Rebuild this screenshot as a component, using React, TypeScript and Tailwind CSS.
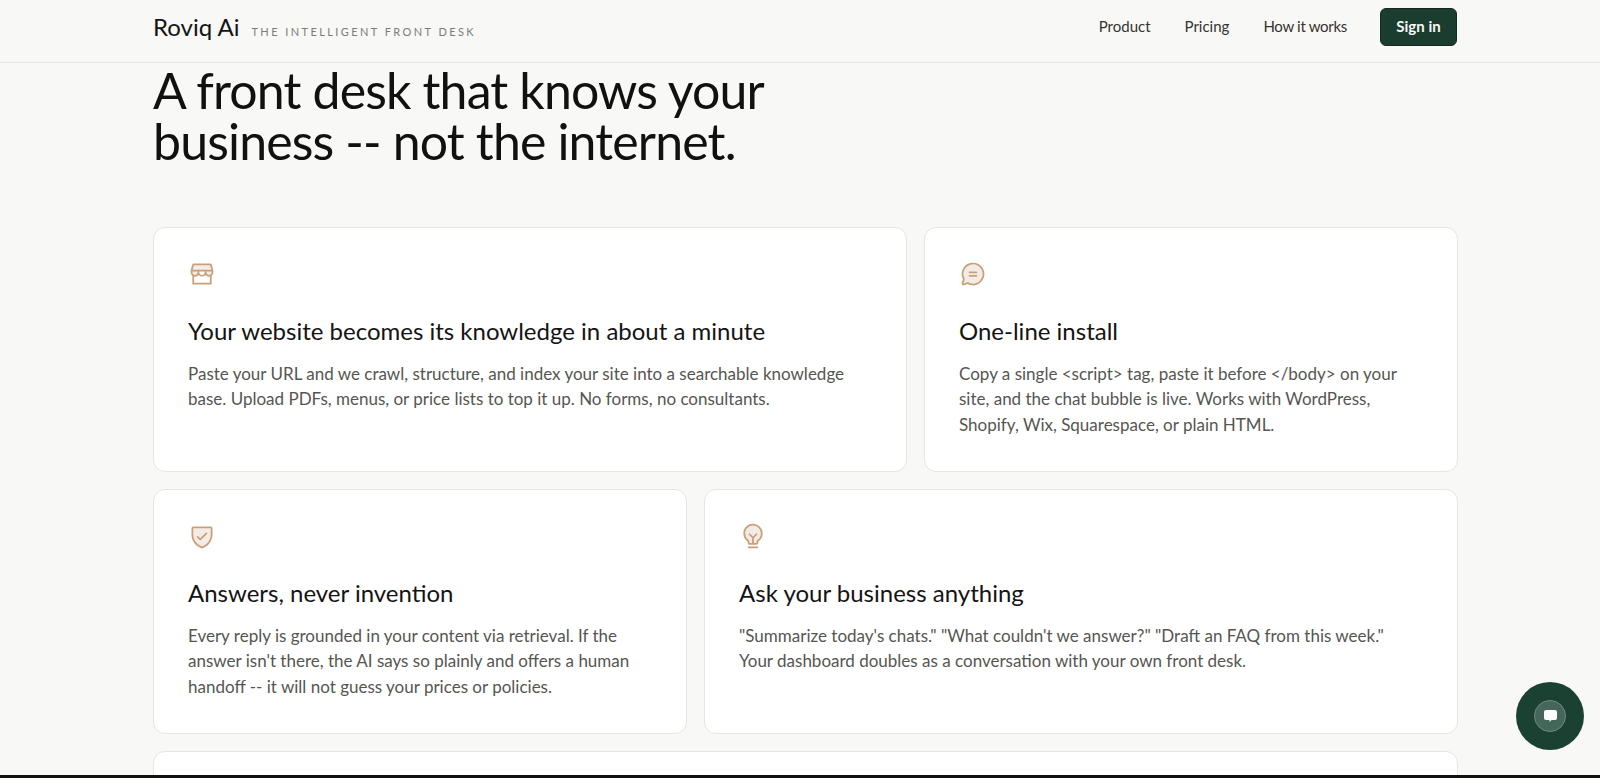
import { PiStorefrontDuotone, PiChatCircleTextDuotone, PiShieldCheckDuotone, PiLightbulbFilamentDuotone } from "react-icons/pi";
import type { ReactNode } from "react";

function Card({ icon, title, children, className }: { icon: ReactNode; title: string; children: ReactNode; className: string }) {
    return (
        <div className={`h-[245px] rounded-xl border border-[#e6e5e0] bg-white pl-[34px] pr-[34px] pt-[32px] ${className}`}>
            <div className="h-[28px] text-[28px] text-[#c79f78]">{icon}</div>
            <h3 className="mt-[27px] text-[24px] leading-[32px] font-normal text-[#141414]">{title}</h3>
            <p className="mt-[14px] text-[17px] leading-[25.5px] text-[#555652]">{children}</p>
        </div>
    );
}

export default function App() {
    return (
        <div className="relative h-[778px] overflow-hidden bg-[#f8f8f6] font-['Lato',sans-serif]">
            {/* Header */}
            <header className="flex h-[63px] items-center justify-between border-b border-[#e6e5e0] pb-[9px] pl-[153px] pr-[143px]">
                <div className="flex items-baseline gap-[12px]">
                    <span className="text-[24px] text-[#141414]">Roviq Ai</span>
                    <span className="text-[11px] tracking-[0.22em] text-[#7c7c78]">THE INTELLIGENT FRONT DESK</span>
                </div>
                <nav className="flex items-center gap-[34px] text-[15px] text-[#333431]">
                    <a>Product</a>
                    <a>Pricing</a>
                    <a className="tracking-[-0.3px]">How it works</a>
                    <button className="-ml-px h-[38px] w-[77px] rounded-md border border-[#14291f] bg-[#1b3d30] text-[15px] font-bold text-[#f8f8f6]">Sign in</button>
                </nav>
            </header>

            <main className="pl-[153px] pr-[142px]">
                <h1 className="mt-[2px] text-[50px] leading-[51px] font-normal tracking-[-0.85px] text-[#111111]">
                    A front desk that knows your
                    <br />
                    business -- not the internet.
                </h1>

                <div className="mt-[59.5px] flex flex-col gap-[17px]">
                    <div className="flex gap-[17px]">
                        <Card className="w-[754px]" icon={<PiStorefrontDuotone />} title="Your website becomes its knowledge in about a minute">
                            Paste your URL and we crawl, structure, and index your site into a searchable knowledge base. Upload PDFs, menus, or price lists to top it up. No forms, no consultants.
                        </Card>
                        <Card className="w-[533.5px]" icon={<PiChatCircleTextDuotone />} title="One-line install">
                            Copy a single &lt;script&gt; tag, paste it before &lt;/body&gt; on your site, and the chat bubble is live. Works with WordPress, Shopify, Wix, Squarespace, or plain HTML.
                        </Card>
                    </div>
                    <div className="flex gap-[17px]">
                        <Card className="w-[534px]" icon={<PiShieldCheckDuotone />} title="Answers, never invention">
                            Every reply is grounded in your content via retrieval. If the answer isn't there, the AI says so plainly and offers a human handoff -- it will not guess your prices or policies.
                        </Card>
                        <Card className="w-[753.5px]" icon={<PiLightbulbFilamentDuotone />} title="Ask your business anything">
                            "Summarize today's chats." "What couldn't we answer?" "Draft an FAQ from this week."
                            <br />
                            Your dashboard doubles as a conversation with your own front desk.
                        </Card>
                    </div>
                    <div className="h-[60px] w-[1304.5px] rounded-xl border border-[#e6e5e0] bg-white" />
                </div>
            </main>

            {/* Chat bubble */}
            <button className="absolute left-[1516px] top-[682px] flex h-[68px] w-[68px] items-center justify-center rounded-full bg-[#1b4133]">
                <span className="flex h-[32px] w-[32px] items-center justify-center rounded-full border border-[#6f8a7e] bg-[#45665a]">
                    <svg width="13" height="12" viewBox="0 0 13 12" fill="#ffffff">
                        <path d="M2 0h9a2 2 0 0 1 2 2v6a2 2 0 0 1-2 2H7.5L5.5 12V10H2a2 2 0 0 1-2-2V2a2 2 0 0 1 2-2z" />
                    </svg>
                </span>
            </button>

            {/* Bottom edge */}
            <div className="absolute bottom-0 left-0 h-[3px] w-full bg-[#111111]" />
        </div>
    );
}
